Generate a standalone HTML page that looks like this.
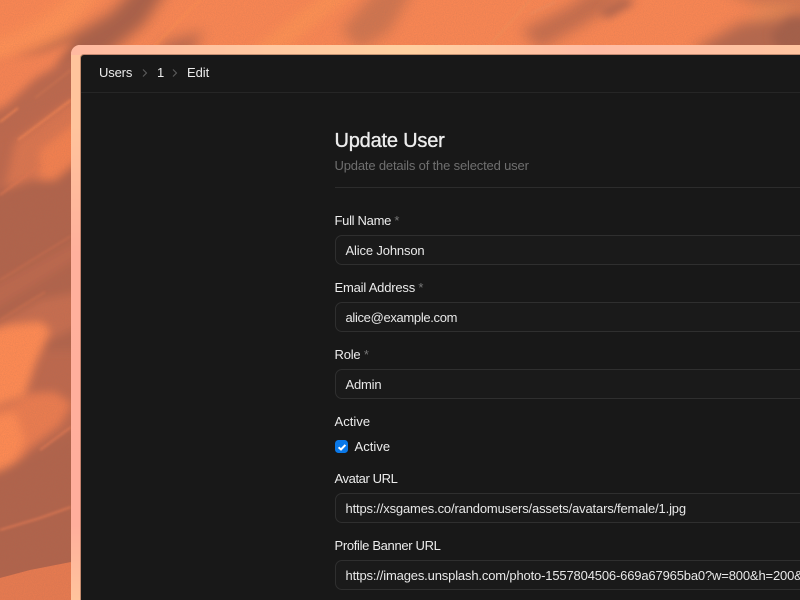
<!DOCTYPE html>
<html>
<head>
<meta charset="utf-8">
<style>
html,body{margin:0;padding:0;width:800px;height:600px;overflow:hidden;background:#181818;font-family:"Liberation Sans",sans-serif;}
.wrap{position:absolute;left:0;top:0;width:800px;height:600px;overflow:hidden;background:#bd684d;}
.bg{position:absolute;left:0;top:0;display:block;}
.frame{position:absolute;left:71px;top:45px;width:729px;height:555px;border-radius:9px 0 0 0;background:linear-gradient(180deg,#ffc49c 0,#ffc49c 80px,#ffb09c 210px,#ffae9c 480px,#ffc49c 555px);overflow:hidden;}
.top{position:absolute;left:0;top:0;width:729px;height:10px;background:linear-gradient(90deg,#ffb9a0 0,#ffc8a0 200px,#ffd0a0 340px,#ffbca4 520px,#ffc4a0 729px);}
.panel{position:absolute;left:81px;top:55px;width:719px;height:545px;background:#181818;border-radius:3px 0 0 0;box-shadow:0 0 0 1px rgba(120,70,50,.45);}
.t{position:absolute;white-space:nowrap;color:#ececec;font-size:13px;line-height:16px;}
.v{color:#e8e8e8;}
.crumbline{position:absolute;left:81px;top:92px;width:719px;height:1px;background:#262626;}
.sep{position:absolute;left:334.5px;top:187px;width:465.5px;height:1px;background:#2c2c2c;}
.inp{position:absolute;left:334.5px;width:480px;height:28px;border:1px solid #2f2f2f;border-radius:7px;background:#1a1a1a;}
.star{color:#777;}
.cb{position:absolute;left:334.5px;top:439.5px;width:13.5px;height:13.5px;border-radius:3.5px;background:#0a78e8;}
</style>
</head>
<body>
<div class="wrap">
<svg class="bg" width="800" height="600" viewBox="0 0 800 600" xmlns="http://www.w3.org/2000/svg">
<defs>
<filter id="b8" filterUnits="userSpaceOnUse" x="-100" y="-100" width="1000" height="800"><feGaussianBlur stdDeviation="7"/></filter>
<filter id="b3" filterUnits="userSpaceOnUse" x="-100" y="-100" width="1000" height="800"><feGaussianBlur stdDeviation="4.5"/></filter>
<filter id="b1" filterUnits="userSpaceOnUse" x="-100" y="-100" width="1000" height="800"><feGaussianBlur stdDeviation="1.2"/></filter>
<filter id="n" filterUnits="userSpaceOnUse" x="0" y="0" width="800" height="600"><feTurbulence type="fractalNoise" baseFrequency="0.9" numOctaves="2" seed="3"/><feColorMatrix values="0 0 0 0 0.35  0 0 0 0 0.15  0 0 0 0 0.1  0.6 0 0 0 -0.18"/></filter>
</defs>
<rect width="800" height="600" fill="#bd684d"/>
<!-- top band -->
<g filter="url(#b8)">
<path d="M-40 -40H860V70H-40Z" fill="#f98653"/>
<path d="M-40 50C0 45 60 20 100 -40H130L60 40 20 50 -40 80Z" fill="#ff9155"/>
<path d="M15 62 70 35 110 12 140 -20 175 -20 145 25 100 62 40 78Z" fill="#a9604a"/>
<path d="M165 40 205 30 190 60 150 62Z" fill="#bf6a4e"/>
<path d="M340 30 375 -10 420 -20 390 32 360 50Z" fill="#cf744f"/>
<path d="M520 30 570 5 590 -10 640 -10 590 22 540 50Z" fill="#c56d4e"/>
<path d="M640 40H720L800 -20V10L720 40Z" fill="#ff9a58" opacity=".7"/>
<path d="M700 -30H860V10L760 8 730 -5Z" fill="#d27650"/>
<path d="M690 50 740 22 800 12 860 20V60H720Z" fill="#b5684e"/>
</g>
<g filter="url(#b3)">
<path d="M608 18 635 3 625 -2 598 12Z" fill="#b0644b"/>
<path d="M770 35 790 18 830 20 830 50 780 50Z" fill="#a35e49"/>
<path d="M240 58 330 -10 360 -10 270 60Z" fill="#ff9552" opacity=".6"/>
</g>
<!-- left strip -->
<g filter="url(#b3)">
<path d="M-40 68 0 60 42 52 75 40 45 78 18 100 -40 125Z" fill="#f68352"/>
<path d="M-40 122 -5 115 35 78 75 55 90 60V90L20 120 -40 155Z" fill="#bb674d"/>
<path d="M15 142 72 100 90 100V135L40 180 28 195 0 210Z" fill="#d97550"/>
<path d="M40 150 90 112V150L55 180 40 190Z" fill="#f2804f"/>
<path d="M-40 205 30 180 55 180 90 150V350H-40Z" fill="#b0634b"/>
<path d="M-40 305 90 235V250L-40 330Z" fill="#c26b4e" opacity=".7"/>
<path d="M-40 345 40 300 90 290 90 320 30 350 -40 400Z" fill="#c66d4f"/>
<path d="M-40 340 10 325 40 322 50 330 35 365 25 395 0 405 -40 415Z" fill="#fe8a52"/>
<path d="M-40 415 5 407 32 393 55 392 72 404 60 425 30 448 20 460 0 470 -40 480Z" fill="#ea7c50"/>
<path d="M-40 425 15 412 25 440 15 462 0 470 -40 480Z" fill="#fe8a52"/>
<path d="M-40 474 0 472 30 452 90 420V570L-40 590Z" fill="#b0634b"/>
</g>
<path d="M0 578 30 570 71 562V600H0Z" fill="#e67a50"/>
<g filter="url(#b1)" fill="none" stroke-linecap="butt">
<path d="M155 45 200 0" stroke="#ff9050" stroke-width="1.2"/>
<path d="M0 122 18 108" stroke="#f78652" stroke-width="1.6"/>
<path d="M18 140 71 100" stroke="#f78652" stroke-width="1.6"/>
<path d="M35 98 71 70" stroke="#cf7250" stroke-width="1.2"/>
<path d="M0 195 40 165" stroke="#e0764f" stroke-width="1.5"/>
<path d="M0 280 71 236" stroke="#cb6e4e" stroke-width="1.2"/>
<path d="M0 320 45 292" stroke="#d0704e" stroke-width="1.2"/>
<path d="M0 530 40 518 71 507" stroke="#e67a52" stroke-width="1.6"/>
<path d="M40 450 71 427" stroke="#e67a52" stroke-width="1.6"/>
<path d="M490 45 530 0" stroke="#f0925a" stroke-width="1"/>
<path d="M530 14 555 2" stroke="#e89264" stroke-width=".8"/>
</g>
<rect width="800" height="600" filter="url(#n)" opacity=".6"/>
</svg>
<div class="frame"><div class="top"></div></div>
<div class="panel"></div>
<div class="crumbline"></div>

<div class="t" style="left:99px;top:65px;letter-spacing:-.15px;">Users</div>
<svg style="position:absolute;left:140px;top:67px" width="10" height="12" viewBox="0 0 10 12"><path d="M3 2.5 6.5 6 3 9.5" fill="none" stroke="#5c5c5c" stroke-width="1.1"/></svg>
<div class="t" style="left:157px;top:65px;">1</div>
<svg style="position:absolute;left:170px;top:67px" width="10" height="12" viewBox="0 0 10 12"><path d="M3 2.5 6.5 6 3 9.5" fill="none" stroke="#5c5c5c" stroke-width="1.1"/></svg>
<div class="t" style="left:187px;top:65px;letter-spacing:-.05px;">Edit</div>

<div class="t" style="left:334.5px;top:130px;font-size:20px;line-height:22px;color:#ededed;letter-spacing:-.2px;-webkit-text-stroke:.35px #ededed;">Update User</div>
<div class="t" style="left:334.5px;top:158px;color:#6f6f6f;letter-spacing:-.17px;">Update details of the selected user</div>
<div class="sep"></div>

<div class="t" style="left:334.5px;top:213px;letter-spacing:-.3px;">Full Name <span class="star">*</span></div>
<div class="inp" style="top:235px;"></div>
<div class="t v" style="left:345.5px;top:243px;letter-spacing:-.15px;">Alice Johnson</div>

<div class="t" style="left:334.5px;top:280px;letter-spacing:-.2px;">Email Address <span class="star">*</span></div>
<div class="inp" style="top:302px;"></div>
<div class="t v" style="left:345.5px;top:310px;letter-spacing:-.33px;">alice@example.com</div>

<div class="t" style="left:334.5px;top:347px;letter-spacing:-.2px;">Role <span class="star">*</span></div>
<div class="inp" style="top:369px;"></div>
<div class="t v" style="left:345.5px;top:377px;letter-spacing:-.2px;">Admin</div>

<div class="t" style="left:334.5px;top:414px;letter-spacing:.05px;">Active</div>
<div class="cb"><svg width="14" height="14" viewBox="0 0 14 14" style="display:block"><path d="M3.6 7.3 6 9.5 10.4 4.9" fill="none" stroke="#fff" stroke-width="2"/></svg></div>
<div class="t" style="left:354.5px;top:439px;letter-spacing:.05px;">Active</div>

<div class="t" style="left:334.5px;top:471px;letter-spacing:-.4px;">Avatar URL</div>
<div class="inp" style="top:493px;"></div>
<div class="t v" style="left:345.5px;top:501px;letter-spacing:-.16px;">https://xsgames.co/randomusers/assets/avatars/female/1.jpg</div>

<div class="t" style="left:334.5px;top:538px;letter-spacing:-.33px;">Profile Banner URL</div>
<div class="inp" style="top:560px;"></div>
<div class="t v" style="left:345.5px;top:568px;letter-spacing:-.16px;">https://images.unsplash.com/photo-1557804506-669a67965ba0?w=800&amp;h=200&amp;fit=crop</div>
</div>
</body>
</html>
